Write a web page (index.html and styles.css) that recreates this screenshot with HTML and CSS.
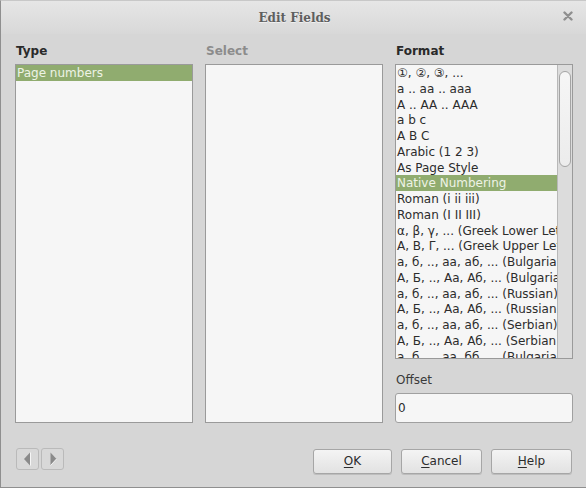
FILE: index.html
```html
<!DOCTYPE html>
<html>
<head>
<meta charset="utf-8">
<link rel="stylesheet" href="styles.css">
</head>
<body>
<div class="window">
  <div class="titlebar">
    <span class="title">Edit Fields</span>
    <span class="close"><svg width="10" height="10" viewBox="0 0 10 10"><path d="M1.5 1.5 L8.5 8.5 M8.5 1.5 L1.5 8.5" stroke="#8f8f8f" stroke-width="2.4" stroke-linecap="round"/></svg></span>
  </div>
  <div class="main">
    <div class="columns">
      <div class="col">
        <div class="label">Type</div>
        <div class="list tall">
          <div class="item sel">Page numbers</div>
        </div>
      </div>
      <div class="col">
        <div class="label dim">Select</div>
        <div class="list tall"></div>
      </div>
      <div class="col">
        <div class="label">Format</div>
        <div class="list short">
          <div class="items">
            <div class="item">①, ②, ③, ...</div>
            <div class="item">a .. aa .. aaa</div>
            <div class="item">A .. AA .. AAA</div>
            <div class="item">a b c</div>
            <div class="item">A B C</div>
            <div class="item">Arabic (1 2 3)</div>
            <div class="item">As Page Style</div>
            <div class="item sel">Native Numbering</div>
            <div class="item">Roman (i ii iii)</div>
            <div class="item">Roman (I II III)</div>
            <div class="item">α, β, γ, ... (Greek Lower Letter)</div>
            <div class="item">Α, Β, Γ, ... (Greek Upper Letter)</div>
            <div class="item">а, б, .., аа, аб, ... (Bulgarian)</div>
            <div class="item">А, Б, .., Аа, Аб, ... (Bulgarian)</div>
            <div class="item">а, б, .., аа, аб, ... (Russian)</div>
            <div class="item">А, Б, .., Аа, Аб, ... (Russian)</div>
            <div class="item">а, б, .., аа, аб, ... (Serbian)</div>
            <div class="item">А, Б, .., Аа, Аб, ... (Serbian)</div>
            <div class="item">а, б, .., аа, бб, ... (Bulgarian)</div>
          </div>
          <div class="scrollbar"><div class="thumb"></div></div>
        </div>
        <div class="label offset">Offset</div>
        <div class="input">0</div>
      </div>
    </div>
    <div class="buttons">
      <div class="nav">
        <div class="navbtn"><svg width="10" height="14" viewBox="0 0 10 14"><path d="M7 0.5 L7 13.5 L1 7 Z" fill="#8a8a8a"/><path d="M7.5 0.5 L7.5 13.5" stroke="#f6f6f6" stroke-width="1"/></svg></div>
        <div class="navbtn"><svg width="10" height="14" viewBox="0 0 10 14"><path d="M2.5 0.5 L2.5 13.5 L8.5 7 Z" fill="#8a8a8a"/><path d="M2.5 13.5 L8.5 7" stroke="#f6f6f6" stroke-width="1"/></svg></div>
      </div>
      <div class="actions">
        <div class="btn ok"><u>O</u>K</div>
        <div class="btn"><u>C</u>ancel</div>
        <div class="btn"><u>H</u>elp</div>
      </div>
    </div>
  </div>
</div>
</body>
</html>
```

FILE: styles.css
```css
html, body {
  margin: 0;
  padding: 0;
}
body {
  width: 586px;
  height: 488px;
  overflow: hidden;
  font-family: "DejaVu Sans", sans-serif;
  font-size: 12px;
  color: #2e2e2e;
  background: #d6d6d6;
}
.window {
  width: 586px;
  height: 488px;
  box-sizing: border-box;
  border-left: 1px solid #8f8f8f;
  border-bottom: 1px solid #8f8f8f;
  border-top: 1px solid #c8c8c8;
  background: #d6d6d6;
  display: flex;
  flex-direction: column;
}
.titlebar {
  height: 33px;
  flex: none;
  display: flex;
  align-items: center;
  justify-content: center;
  position: relative;
  background: linear-gradient(#e6e6e6, #d8d8d8);
}
.title {
  font-family: "DejaVu Serif", serif;
  font-weight: bold;
  font-size: 12px;
  color: #5e5e5e;
  text-shadow: 0 1px 0 #f0f0f0;
  margin-left: 2px;
}
.close {
  position: absolute;
  right: 13px;
  top: 10px;
  width: 10px;
  height: 10px;
  display: flex;
}
.main {
  flex: 1;
  display: flex;
  flex-direction: column;
  padding: 9px 0 0 14px;
}
.columns {
  display: flex;
  gap: 12px;
}
.col {
  width: 178px;
  display: flex;
  flex-direction: column;
}
.label {
  font-weight: bold;
  font-size: 12px;
  height: 21px;
  line-height: 16px;
  padding-left: 1px;
  color: #2a2a2a;
}
.label.dim {
  color: #8c8c8c;
}
.label.offset {
  font-weight: normal;
  color: #3a3a3a;
  margin-top: 11px;
  height: 23px;
  line-height: 20px;
}
.list {
  box-sizing: border-box;
  border: 1px solid #9a9a9a;
  background: #f6f6f6;
  overflow: hidden;
}
.list.tall {
  height: 359px;
}
.list.short {
  height: 295px;
  display: flex;
}
.items {
  flex: 1;
  overflow: hidden;
  min-width: 0;
}
.item {
  height: 15.75px;
  line-height: 16px;
  padding-left: 1px;
  white-space: nowrap;
  overflow: hidden;
  color: #2c2c2c;
}
.item.sel {
  background: #90ac6f;
  color: #eef3e6;
}
.scrollbar {
  width: 15px;
  flex: none;
  box-sizing: border-box;
  border-left: 1px solid #b8b8b8;
  background: #dcdcdc;
  padding: 6px 1px 0 1px;
}
.thumb {
  height: 96px;
  box-sizing: border-box;
  border: 1px solid #a4a4a4;
  border-radius: 6px;
  background: linear-gradient(#f6f6f6, #ececec);
}
.input {
  box-sizing: border-box;
  height: 30px;
  border: 1px solid #a0a0a0;
  border-radius: 3px;
  background: #f6f6f6;
  line-height: 28px;
  padding-left: 2px;
  color: #2c2c2c;
}
.buttons {
  display: flex;
  justify-content: space-between;
  align-items: flex-start;
  margin-top: 25px;
  width: 557px;
}
.nav {
  display: flex;
  gap: 2px;
  padding-left: 1px;
}
.navbtn {
  box-sizing: border-box;
  width: 23px;
  height: 22px;
  border: 1px solid #bababa;
  border-radius: 3px;
  background: #d8d8d8;
  display: flex;
  align-items: center;
  justify-content: center;
}
.actions {
  display: flex;
  gap: 9px;
  margin-top: 1px;
}
.btn {
  box-sizing: border-box;
  width: 81px;
  height: 25px;
  border: 1px solid #a6a6a6;
  border-radius: 3px;
  background: linear-gradient(#f4f4f4, #e2e2e2);
  box-shadow: 0 1px 0 #bdbdbd;
  text-align: center;
  line-height: 23px;
  color: #2c2c2c;
}
.btn.ok {
  width: 79px;
}
.btn u {
  text-decoration: underline;
  text-underline-offset: 2px;
}
```
